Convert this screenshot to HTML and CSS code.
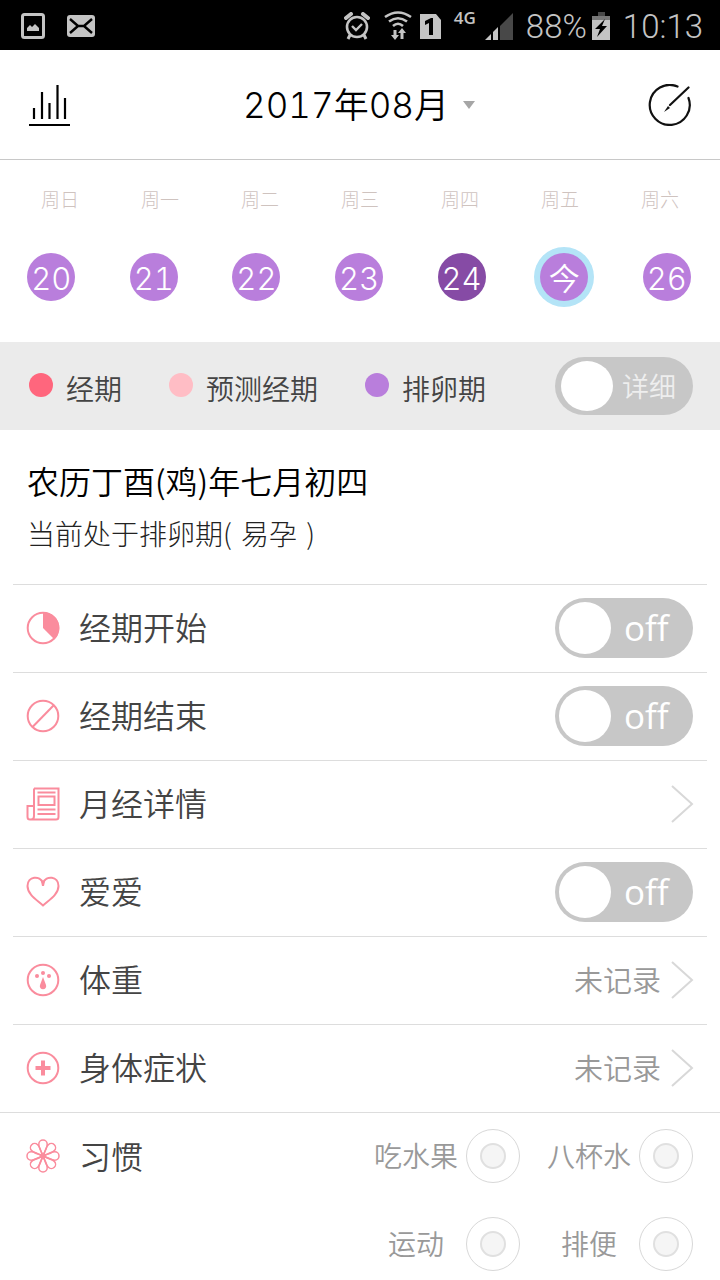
FILE: index.html
```html
<!DOCTYPE html>
<html lang="zh-CN">
<head>
<meta charset="utf-8">
<meta name="viewport" content="width=device-width, initial-scale=1">
<title>2017年08月</title>
<link rel="stylesheet" href="styles.css">
</head>
<body>
<div class="status-bar">
  <div class="status-left">
    <svg width="24" height="26" viewBox="0 0 24 26"><rect x="1.5" y="1.5" width="21" height="23" rx="2" fill="none" stroke="#c4c4c4" stroke-width="3"/><path d="M6 18v-3l3-3 2 2 3-3 4 4v3z" fill="#c4c4c4"/></svg>
    <svg width="28" height="22" viewBox="0 0 28 22"><rect width="28" height="22" rx="3" fill="#c4c4c4"/><path d="M3 4l8 7h6l8-7M3 18l8-7M25 18l-8-7" fill="none" stroke="#000" stroke-width="2.4"/></svg>
  </div>
  <div class="status-right">
    <svg width="26" height="28" viewBox="0 0 26 28" fill="none" stroke="#c4c4c4"><circle cx="13" cy="15" r="10" stroke-width="2.6"/><path d="M8 14l4 4 6-6" stroke-width="2.4"/><path d="M2 6l5-4M24 6l-5-4" stroke-width="4" stroke-linecap="round"/><path d="M6 23l-2 4M20 23l2 4" stroke-width="3"/></svg>
    <svg class="icon-wifi" width="28" height="30" viewBox="0 0 28 30" fill="none" stroke="#c4c4c4" stroke-width="2.6"><path d="M1 6Q14-3 27 6M5 10.500Q14 4 23 10.500M9 15Q14 10.500 19 15"/><path d="M11 19v6M18 28v-7" stroke-width="3"/><path d="M7 24h8l-4 5zM14 22h8l-4-5z" fill="#c4c4c4" stroke="none"/></svg>
    <svg class="icon-sim" width="22" height="27" viewBox="0 0 22 27"><path d="M0 1h16l5 6v19H0z" fill="#c4c4c4"/><path d="M5 8l6-3h2v17H9V10l-4 2z" fill="#000"/></svg>
    <span class="network">4G</span>
    <svg class="icon-signal" width="28" height="27" viewBox="0 0 28 27"><path d="M0 27l6-6v6z" fill="#c4c4c4"/><path d="M8 19l5-5v13H8z" fill="#c4c4c4"/><path d="M15 13L28 0v27H15z" fill="#484848"/></svg>
    <span class="status-text">88%</span>
    <svg class="icon-battery" width="18" height="28" viewBox="0 0 18 28"><path d="M6 0h7v4H6z" fill="#484848"/><path d="M0 4h18v5H0z" fill="#777"/><path d="M0 8h18v20H0z" fill="#c4c4c4"/><path d="M13 7L3 17h5l-3 8L15 14h-5l3-7z" fill="#000"/></svg>
    <span class="status-text">10:13</span>
  </div>
</div>

<header class="header">
  <button class="icon-button" type="button" aria-label="统计"><svg width="42" height="42" viewBox="0 0 42 42" fill="none" stroke="#000" stroke-width="2.200"><path d="M6 24v11M14 8v27M21.500 19v16M29.500 1v34M37 14v21M1 41h41"/></svg></button>
  <button class="month" type="button"><span>2017年08月</span><svg width="12" height="8" viewBox="0 0 12 8"><path d="M0 0h12L6 8z" fill="#a6a6a6"/></svg></button>
  <button class="icon-button" type="button" aria-label="记录"><svg width="44" height="42" viewBox="0 0 44 42" fill="none" stroke="#111" stroke-width="2.200" stroke-linecap="round"><path d="M29.500 2.500A20 20 0 1 0 40.500 14M40.500 3.500L22 21"/><path d="M20 22l2 2-6 4z" fill="#111" stroke="none"/></svg></button>
</header>

<section class="calendar">
  <div class="weekdays"><span>周日</span><span>周一</span><span>周二</span><span>周三</span><span>周四</span><span>周五</span><span>周六</span></div>
  <div class="days">
    <button class="day" type="button">20</button>
    <button class="day" type="button">21</button>
    <button class="day" type="button">22</button>
    <button class="day" type="button">23</button>
    <button class="day day-peak" type="button">24</button>
    <button class="day day-today" type="button">今</button>
    <button class="day" type="button">26</button>
  </div>
</section>

<section class="legend">
  <div class="legend-items">
    <span class="legend-item"><i class="dot dot-period"></i>经期</span>
    <span class="legend-item"><i class="dot dot-forecast"></i>预测经期</span>
    <span class="legend-item"><i class="dot dot-ovulation"></i>排卵期</span>
  </div>
  <label class="toggle toggle-detail"><input type="checkbox" class="knob"><span>详细</span></label>
</section>

<main>
  <section class="summary">
    <h1 class="lunar">农历丁酉(鸡)年七月初四</h1>
    <p class="phase">当前处于排卵期( <span class="phase-note">易孕</span> )</p>
  </section>

  <div class="rows">
    <div class="row">
      <svg class="row-icon" viewBox="0 0 34 34"><circle cx="17" cy="17" r="15.300"/><path class="solid" d="M17 1a16 16 0 0 1 11.500 27.500L17 17z"/></svg>
      <label class="row-label" for="start">经期开始</label>
      <label class="toggle"><input type="checkbox" id="start" class="knob"><span>off</span></label>
    </div>
    <div class="row">
      <svg class="row-icon" viewBox="0 0 34 34"><circle cx="17" cy="17" r="15.300"/><path d="M6.500 28L27.500 6.500"/></svg>
      <label class="row-label" for="end">经期结束</label>
      <label class="toggle"><input type="checkbox" id="end" class="knob"><span>off</span></label>
    </div>
    <a class="row" href="#detail">
      <svg class="row-icon" viewBox="0 0 34 34"><path d="M8 1.500h24.500V30q0 2.500-2.500 2.500H4Q1.500 32.500 1.500 30V19H8M8 1.500V29q0 3.500-3 3.500M12.500 9.500h16v8.500h-16zM11.500 5.500h18M11.500 22.500h18M11.500 27h18"/></svg>
      <span class="row-label">月经详情</span>
      <svg class="chevron" viewBox="0 0 24 38"><path d="M2 1l20 18L2 37"/></svg>
    </a>
    <div class="row">
      <svg class="row-icon" viewBox="0 0 34 34"><path d="M17 30.500C11 25 1.500 19.500 1.500 11 1.500 1 14 0 17 8 20 0 32.500 1 32.500 11 32.500 19.500 23 25 17 30.500z"/><path class="solid" d="M14.500 4l2.500 3 2.500-3-1.500 7h-2z"/></svg>
      <label class="row-label" for="love">爱爱</label>
      <label class="toggle"><input type="checkbox" id="love" class="knob"><span>off</span></label>
    </div>
    <a class="row" href="#weight">
      <svg class="row-icon" viewBox="0 0 34 34"><circle cx="17" cy="17" r="15.300"/><g class="solid"><circle cx="11" cy="13" r="2"/><circle cx="17" cy="10" r="2"/><circle cx="23" cy="13" r="2"/><path d="M17 14l3 8a3.200 3.200 0 1 1-6 0z"/></g></svg>
      <span class="row-label">体重</span>
      <span class="row-value">未记录</span>
      <svg class="chevron" viewBox="0 0 24 38"><path d="M2 1l20 18L2 37"/></svg>
    </a>
    <a class="row" href="#symptoms">
      <svg class="row-icon" viewBox="0 0 34 34"><circle cx="17" cy="17" r="15.300"/><path class="thick" d="M17 9.500v15M9.500 17h15"/></svg>
      <span class="row-label">身体症状</span>
      <span class="row-value">未记录</span>
      <svg class="chevron" viewBox="0 0 24 38"><path d="M2 1l20 18L2 37"/></svg>
    </a>
  </div>

  <section class="habits">
    <div class="habits-title">
      <svg class="row-icon flower" viewBox="0 0 34 34"><defs><path id="petal" d="M17 16Q12.800 9 12.800 5.200a4.200 4.200 0 0 1 8.400 0Q21.200 9 17 16z"/></defs><use href="#petal"/><use href="#petal" transform="rotate(45 17 17)"/><use href="#petal" transform="rotate(90 17 17)"/><use href="#petal" transform="rotate(135 17 17)"/><use href="#petal" transform="rotate(180 17 17)"/><use href="#petal" transform="rotate(225 17 17)"/><use href="#petal" transform="rotate(270 17 17)"/><use href="#petal" transform="rotate(315 17 17)"/></svg>
      <span class="row-label">习惯</span>
    </div>
    <div class="habit-grid">
      <label class="habit"><span>吃水果</span><input type="checkbox" class="habit-check"></label>
      <label class="habit"><span>八杯水</span><input type="checkbox" class="habit-check"></label>
      <label class="habit"><span>运动</span><input type="checkbox" class="habit-check"></label>
      <label class="habit"><span>排便</span><input type="checkbox" class="habit-check"></label>
    </div>
  </section>
</main>
</body>
</html>
```
FILE: styles.css
```css
* {
  box-sizing: border-box;
}

body {
  margin: 0;
  background: #fff;
  color: #444;
  font-family: "Noto Sans CJK SC", sans-serif;
  font-weight: 350;
}

button {
  padding: 0;
  border: 0;
  background: none;
  font: inherit;
  color: inherit;
}

svg {
  display: block;
  flex: none;
}

.status-bar {
  display: flex;
  justify-content: space-between;
  height: 50px;
  padding: 2px 17px 0 21px;
  background: #000;
  color: #c4c4c4;
  font-family: Roboto, sans-serif;
  font-weight: 350;
}

.status-left,
.status-right {
  display: flex;
  align-items: center;
}

.status-left {
  gap: 22px;
}

.icon-wifi {
  margin-left: 14px;
}

.icon-sim {
  margin-left: 8px;
}

.network {
  align-self: flex-start;
  margin: 4px 9px 0 12px;
  font-family: "Open Sans", sans-serif;
  font-size: 17px;
  font-weight: 600;
  line-height: 24px;
}

.status-text {
  margin-left: 13px;
  padding-top: 2px;
  font-size: 33px;
  line-height: 48px;
}

.icon-battery {
  margin-left: 5px;
}

.header {
  display: flex;
  align-items: center;
  justify-content: space-between;
  height: 110px;
  padding: 0 28px;
  border-bottom: 1px solid #c8c8c8;
  color: #000;
}

.month {
  display: flex;
  align-items: center;
  gap: 14px;
  font-family: Inter, "Noto Sans CJK SC", sans-serif;
  font-size: 35px;
  font-variant-numeric: tabular-nums;
  font-weight: 350;
  line-height: 48px;
}

.calendar {
  height: 182px;
  padding-top: 24px;
}

.weekdays {
  display: grid;
  grid-template-columns: repeat(7, 1fr);
  padding: 0 10px;
  color: #cfc3bf;
  font-size: 19px;
  font-weight: 300;
  line-height: 30px;
  text-align: center;
}

.days {
  display: grid;
  grid-template-columns: repeat(7, 1fr);
  justify-items: center;
  padding: 39px 2px 0 0;
}

.day {
  width: 48px;
  height: 48px;
  border-radius: 50%;
  padding-top: 4px;
  background: #b97edc;
  color: #fff;
  font-family: Inter, "Noto Sans CJK SC", sans-serif;
  font-size: 31px;
  font-variant-numeric: tabular-nums;
  font-weight: 350;
  line-height: 44px;
}

.day-peak {
  background: #864ba5;
}

.day-today {
  box-shadow: 0 0 0 6px #b4e4f7;
}

.legend {
  display: flex;
  align-items: center;
  justify-content: space-between;
  height: 88px;
  padding: 0 27px 0 29px;
  background: #ebebeb;
}

.legend-items {
  display: flex;
  gap: 47px;
  padding-top: 4px;
}

.legend-item {
  display: flex;
  align-items: center;
  gap: 13px;
  font-size: 28px;
  line-height: 40px;
}

.dot {
  width: 24px;
  height: 24px;
  margin-bottom: 6px;
  border-radius: 50%;
}

.dot-period {
  background: #ff667d;
}

.dot-forecast {
  background: #ffbdc5;
}

.dot-ovulation {
  background: #b97edc;
}

.toggle {
  display: flex;
  flex: none;
  align-items: center;
  width: 138px;
  height: 60px;
  padding-left: 4px;
  border-radius: 30px;
  background: #c7c7c7;
  color: #fff;
  font-family: "Open Sans", sans-serif;
  font-size: 35px;
  font-weight: 400;
  line-height: 48px;
}

.knob {
  appearance: none;
  width: 52px;
  height: 52px;
  margin: 0 13px 0 0;
  border-radius: 50%;
  background: #fff;
}

.toggle-detail {
  height: 58px;
  padding-left: 6px;
  color: #eee;
  font-family: "Noto Sans CJK SC", sans-serif;
  font-size: 27px;
  font-weight: 350;
}

.toggle-detail .knob {
  height: 50px;
  margin-right: 9px;
}

.summary {
  height: 154px;
  padding: 26px 27px 0;
  color: #222;
}

.lunar {
  margin: 0;
  color: #000;
  font-size: 32px;
  font-weight: 350;
  line-height: 48px;
}

.phase {
  margin: 9px 0 0;
  font-size: 28px;
  font-weight: 300;
  line-height: 40px;
}

.phase-note {
  margin: 0 3px;
}

.rows {
  padding: 0 13px;
}

.row {
  display: flex;
  align-items: center;
  height: 88px;
  padding: 0 14px 2px 13px;
  border-top: 1px solid #ddd;
  color: inherit;
  text-decoration: none;
}

.row-icon {
  width: 34px;
  height: 34px;
  fill: none;
  stroke: #fa8c9d;
  stroke-width: 2;
}

.flower {
  stroke-width: 1.5;
}

.solid {
  fill: #fa8c9d;
  stroke: none;
}

.thick {
  stroke-width: 4;
}

.row-label {
  flex: 1;
  margin-left: 19px;
  padding-bottom: 3px;
  font-size: 32px;
  line-height: 48px;
}

.row-value {
  margin-right: 9px;
  padding-bottom: 2px;
  color: #999;
  font-size: 29px;
  line-height: 40px;
}

.chevron {
  width: 24px;
  height: 38px;
  margin-right: -1px;
  fill: none;
  stroke: #d8d8d8;
  stroke-width: 2;
}

.habits {
  display: flex;
  justify-content: space-between;
  padding: 16px 27px 9px 26px;
  border-top: 1px solid #ddd;
}

.habits-title {
  display: flex;
  align-items: center;
  height: 54px;
}

.habit-grid {
  display: grid;
  grid-template-columns: auto auto;
  gap: 34px 27px;
}

.habit {
  display: flex;
  align-items: center;
  gap: 8px;
  color: #999;
  font-size: 28px;
  line-height: 40px;
}

.habit span {
  flex: 1;
  padding-bottom: 2px;
  text-align: center;
}

.habit-check {
  appearance: none;
  display: grid;
  place-items: center;
  width: 54px;
  height: 54px;
  margin: 0;
  border: 1px solid #d8d8d8;
  border-radius: 50%;
}

.habit-check::before {
  content: "";
  width: 22px;
  height: 22px;
  border: 2px solid #e0e0e0;
  border-radius: 50%;
  background: #f5f5f5;
}
```
